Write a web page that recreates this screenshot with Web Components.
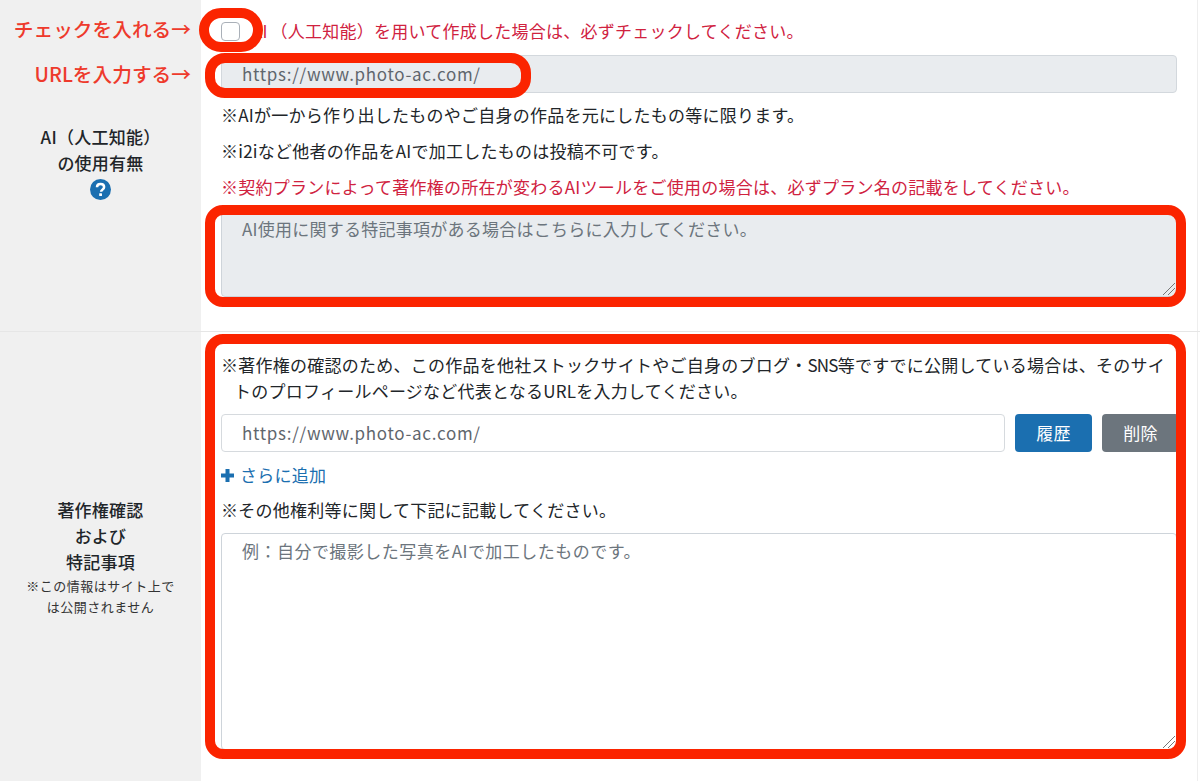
<!DOCTYPE html>
<html lang="ja">
<head>
<meta charset="utf-8">
<title>AI</title>
<style>
  html, body { margin: 0; height: 100%; overflow: hidden; background: #fff; }
  body {
    font-family: "Noto Sans CJK JP", "Liberation Sans", sans-serif;
    font-size: 17px;
    line-height: 26px;
    letter-spacing: .25px;
    color: #212529;
  }
  .danger { color: #d0223f; }
  .hang { margin: 0 0 9px; padding-left: 13px; text-indent: -13px; white-space: nowrap; line-height: 26px; position: relative; top: -1px; }
</style>
</head>
<body>

<template id="form-row-tpl">
  <style>
    :host { display: grid; grid-template-columns: 201px 1fr; box-sizing: border-box; }
    .head {
      display: flex;
      flex-direction: column;
      align-items: center;
      justify-content: center;
      box-sizing: border-box;
      padding-bottom: var(--head-shift, 0);
      background: #f0f0f0;
      text-align: center;
      font-weight: 500;
    }
    .body { display: flex; flex-direction: column; padding: var(--pad-top, 19px) 20px 0 20px; border-right: 1px solid #eee; margin-right: 2px; min-width: 0; }
  </style>
  <div class="head"><slot name="head"></slot></div>
  <div class="body"><slot></slot></div>
</template>

<template id="note-line-tpl">
  <style>
    :host { display: block; box-sizing: border-box; height: 26px; line-height: 24px; margin-bottom: 10px; white-space: nowrap; }
  </style>
  <slot></slot>
</template>

<template id="text-field-tpl">
  <style>
    :host {
      display: block;
      box-sizing: border-box;
      height: 38px;
      padding: 5px 20px;
      border: 1px solid #d6dade;
      border-radius: 4px;
      background: #fff;
      color: #5f666d;
      letter-spacing: .7px;
      white-space: nowrap;
    }
    :host([disabled]) { background: #e9ecef; border-color: #d3d8dd; }
  </style>
  <slot></slot>
</template>

<template id="text-box-tpl">
  <style>
    :host {
      display: block;
      position: relative;
      box-sizing: border-box;
      padding: 4px 20px;
      border: 1px solid #ced4da;
      border-radius: 4px;
      background: #fff;
      color: #6c757d;
    }
    :host([disabled]) { background: #e9ecef; }
    svg { position: absolute; right: 0; bottom: 0; width: 14px; height: 14px; }
  </style>
  <slot></slot>
  <svg viewBox="0 0 14 14" fill="none" stroke="#777" stroke-width="1">
    <path d="M1 13 13 1M6 13l7-7"/>
  </svg>
</template>

<template id="action-btn-tpl">
  <style>
    :host {
      display: flex;
      align-items: center;
      justify-content: center;
      flex: none;
      box-sizing: border-box;
      width: 77px;
      height: 38px;
      border-radius: 4px;
      background: var(--bg, #1b6fb0);
      color: #fff;
    }
  </style>
  <slot></slot>
</template>

<template id="help-icon-tpl">
  <style>
    :host { display: block; width: 21px; height: 21px; margin-top: 3px; }
    svg { display: block; }
  </style>
  <svg width="21" height="21" viewBox="0 0 21 21">
    <circle cx="10.5" cy="10.5" r="10.5" fill="#1b6fb0"/>
    <path d="M7 8.2c0-2 1.6-3.2 3.6-3.2s3.5 1.2 3.5 3c0 2.600-3 2.600-3 4.800" fill="none" stroke="#fff" stroke-width="2.500"/>
    <rect x="9.200" y="14.300" width="2.800" height="2.800" rx=".5" fill="#fff"/>
  </svg>
</template>

<template id="add-link-tpl">
  <style>
    :host { display: flex; align-items: center; gap: 6px; height: 26px; line-height: 24px; color: #1b6fb0; margin-bottom: 10px; }
    svg { flex: none; }
  </style>
  <svg width="13" height="13" viewBox="0 0 13 13"><path d="M6.500 0v13M0 6.500h13" stroke="#1b6fb0" stroke-width="4"/></svg>
  <slot></slot>
</template>

<template id="mark-box-tpl">
  <style>
    :host {
      position: absolute;
      box-sizing: border-box;
      border: 10px solid #fb2400;
      border-radius: var(--r, 18px);
      pointer-events: none;
    }
  </style>
</template>

<template id="side-tag-tpl">
  <style>
    :host {
      position: absolute;
      right: 1009px;
      font-size: 19.7px;
      font-weight: 500;
      letter-spacing: 0;
      line-height: 26px;
      color: #ee3a2c;
      white-space: nowrap;
    }
  </style>
  <slot></slot>
</template>

<form-row style="height:331px;--head-shift:8px;border-bottom:1px solid #e6e6e6;box-sizing:content-box">
  <div slot="head">AI（人工知能）</div>
  <div slot="head">の使用有無</div>
  <help-icon slot="head"></help-icon>

  <note-line class="danger" style="padding-left:31px">A<span style="letter-spacing:3px">I</span>（人工知能）を用いて作成した場合は、必ずチェックしてください。</note-line>
  <text-field disabled>https://www.photo-ac.com/</text-field>
  <note-line style="margin-top:10px">※AIが一から作り出したものやご自身の作品を元にしたもの等に限ります。</note-line>
  <note-line>※i2iなど他者の作品をAIで加工したものは投稿不可です。</note-line>
  <note-line class="danger">※契約プランによって著作権の所在が変わるAIツールをご使用の場合は、必ずプラン名の記載をしてください。</note-line>
  <text-box disabled style="height:86px">AI使用に関する特記事項がある場合はこちらに入力してください。</text-box>
</form-row>

<form-row style="height:449px;--pad-top:21px">
  <div slot="head">著作権確認</div>
  <div slot="head">および</div>
  <div slot="head">特記事項</div>
  <div slot="head" style="font-size:13px;font-weight:400;line-height:21px;letter-spacing:.5px;color:#333;margin-top:0">※この情報はサイト上で<br>は公開されません</div>

  <p class="hang">※著作権の確認のため、この作品を他社ストックサイトやご自身のブログ・<span style="letter-spacing:-.8px">SNS</span>等ですでに公開している場合は、そのサイ<br>トのプロフィールページなど代表となるURLを入力してください。</p>
  <div style="display:flex;gap:10px;margin-bottom:10px;width:958px">
    <text-field style="width:784px;flex:none">https://www.photo-ac.com/</text-field>
    <action-btn>履歴</action-btn>
    <action-btn style="--bg:#6c757d">削除</action-btn>
  </div>
  <add-link>さらに追加</add-link>
  <note-line style="margin-bottom:9px">※その他権利等に関して下記に記載してください。</note-line>
  <text-box style="height:217px;letter-spacing:.47px">例：自分で撮影した写真をAIで加工したものです。</text-box>
</form-row>

<!-- annotations drawn on top of the screenshot -->
<div id="check" style="position:absolute;left:221px;top:22px;width:19px;height:19px;box-sizing:border-box;border:1px solid #aab0b8;border-radius:4px;background:#fff"></div>
<mark-box style="left:199px;top:8px;width:64px;height:44px;--r:22px"></mark-box>
<mark-box style="left:205px;top:53px;width:326px;height:45px;--r:20px"></mark-box>
<mark-box style="left:205px;top:205px;width:981px;height:102px"></mark-box>
<mark-box style="left:205px;top:334px;width:981px;height:425px"></mark-box>
<side-tag style="top:16px">チェックを入れる→</side-tag>
<side-tag style="top:61px">URLを入力する→</side-tag>

<script>
  const define = (name, tplId) => {
    customElements.define(name, class extends HTMLElement {
      connectedCallback() {
        if (this.shadowRoot) return
        const root = this.attachShadow({ mode: 'open' })
        root.appendChild(document.getElementById(tplId).content.cloneNode(true))
      }
    })
  }

  define('form-row', 'form-row-tpl')
  define('note-line', 'note-line-tpl')
  define('text-field', 'text-field-tpl')
  define('text-box', 'text-box-tpl')
  define('action-btn', 'action-btn-tpl')
  define('help-icon', 'help-icon-tpl')
  define('add-link', 'add-link-tpl')
  define('mark-box', 'mark-box-tpl')
  define('side-tag', 'side-tag-tpl')
</script>
</body>
</html>
